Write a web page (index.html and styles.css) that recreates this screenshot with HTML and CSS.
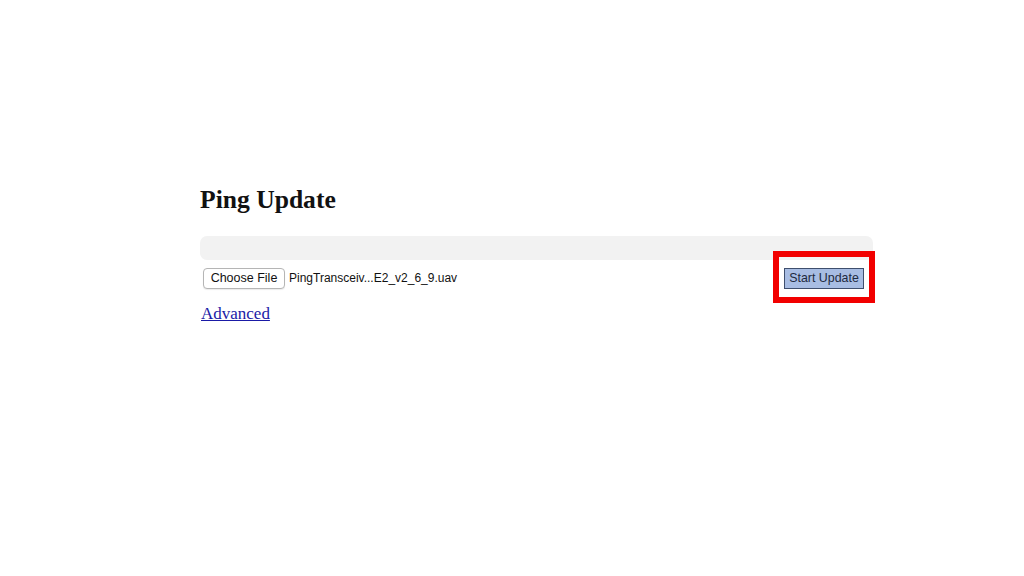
FILE: index.html
```html
<!DOCTYPE html>
<html>
<head>
<meta charset="utf-8">
<title>Ping Update</title>
<link rel="stylesheet" href="styles.css">
</head>
<body>
<main class="page">
  <h2 class="title">Ping Update</h2>
  <div class="progress"><div class="progress-fill"></div></div>
  <div class="controls">
    <div class="file-picker">
      <button class="choose-btn" type="button">Choose File</button>
      <span class="file-name">PingTransceiv...E2_v2_6_9.uav</span>
    </div>
    <div class="start-wrap">
      <button class="start-btn" type="button">Start Update</button>
      <span class="highlight"></span>
    </div>
  </div>
  <a class="advanced" href="#">Advanced</a>
</main>
</body>
</html>
```

FILE: styles.css
```css
html, body {
  margin: 0;
  padding: 0;
  background: #ffffff;
}

.page {
  width: 673px;
  margin-left: 200px;
  padding-top: 186px;
  font-family: "Liberation Serif", "Times New Roman", serif;
  color: #111;
}

.title {
  margin: 0;
  font-size: 25.6px;
  line-height: 28px;
  font-weight: bold;
}

.progress {
  margin-top: 22px;
  height: 24px;
  border-radius: 7px;
  background: #f2f2f2;
}

.progress-fill {
  width: 0;
  height: 100%;
}

.controls {
  margin-top: 7px;
  display: flex;
  justify-content: space-between;
  align-items: center;
  height: 22px;
}

.file-picker {
  display: flex;
  align-items: center;
  gap: 4px;
  padding-left: 3px;
}

.choose-btn {
  font-family: "Liberation Sans", Arial, sans-serif;
  font-size: 12.5px;
  line-height: 19px;
  color: #111;
  background: #ffffff;
  border: 1px solid #b5b5b5;
  border-radius: 4px;
  height: 21px;
  width: 82px;
  padding: 0;
  box-shadow: 0 1px 1px rgba(0,0,0,0.08);
}

.file-name {
  font-family: "Liberation Sans", Arial, sans-serif;
  font-size: 12px;
  color: #111;
}

.start-wrap {
  position: relative;
  margin-right: 9px;
}

.start-btn {
  font-family: "Liberation Sans", Arial, sans-serif;
  font-size: 12.4px;
  color: #1e2a40;
  background: #a8bde3;
  border: 1px solid #3f4f6e;
  border-radius: 0;
  height: 21px;
  width: 80px;
  padding: 0;
  display: block;
}

.highlight {
  position: absolute;
  left: -11px;
  top: -17px;
  width: 90px;
  height: 40px;
  border: 6px solid #f20000;
  pointer-events: none;
}

.advanced {
  display: inline-block;
  margin-top: 15px;
  margin-left: 1px;
  font-size: 17px;
  color: #1a1aa6;
  text-decoration: underline;
}
```
